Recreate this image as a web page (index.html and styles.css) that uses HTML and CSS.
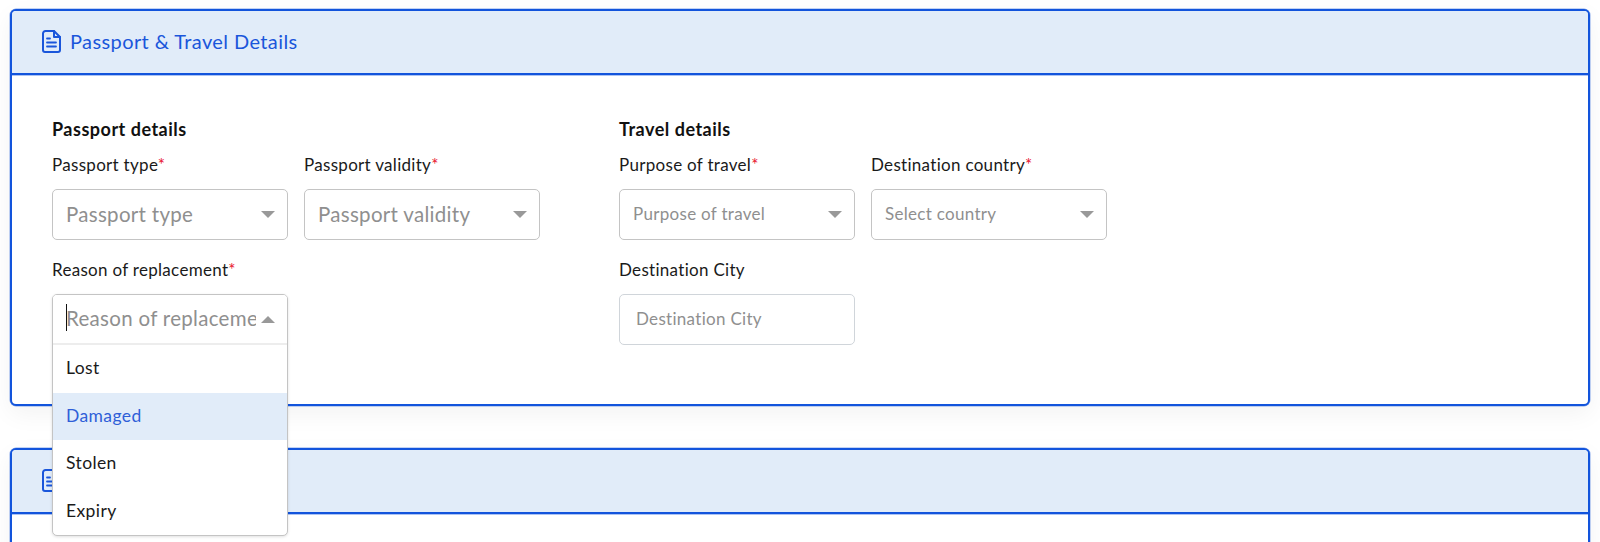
FILE: index.html
```html
<!DOCTYPE html>
<html lang="en">
<head>
    <meta charset="UTF-8">
    <meta name="viewport" content="width=device-width, initial-scale=1.0">
    <title>Passport &amp; Travel Details</title>
    <link rel="stylesheet" href="styles.css">
</head>
<body>
    <div class="container">
        <section class="card">
            <div class="card-header">
                <svg class="doc-icon" viewBox="0 0 19 23" fill="none" stroke="currentColor" stroke-width="2" stroke-linejoin="round" stroke-linecap="round">
                    <path d="M3.500 1H12l6 6v13a2 2 0 0 1-2 2H3a2 2 0 0 1-2-2V3.500a2.500 2.500 0 0 1 2.500-2.500z"/>
                    <path d="M12 1v6h6"/>
                    <path d="M5 8.500h3M5 12.500h9M5 16.500h9" stroke-width="1.800"/>
                </svg>
                <span class="card-title">Passport &amp; Travel Details</span>
            </div>
            <div class="card-body">
                <div class="form-group">
                    <h3 class="group-title">Passport details</h3>
                    <div class="row">
                        <div class="field">
                            <label class="field-label">Passport type<span class="req">*</span></label>
                            <div class="select select-lg">
                                <span class="placeholder">Passport type</span>
                                <span class="arrow"></span>
                            </div>
                        </div>
                        <div class="field">
                            <label class="field-label">Passport validity<span class="req">*</span></label>
                            <div class="select select-lg">
                                <span class="placeholder">Passport validity</span>
                                <span class="arrow"></span>
                            </div>
                        </div>
                    </div>
                    <div class="row">
                        <div class="field field-open">
                            <label class="field-label">Reason of replacement<span class="req">*</span></label>
                            <div class="dropdown">
                                <div class="select select-open">
                                    <span class="text-cursor"></span>
                                    <span class="placeholder">Reason of replacement</span>
                                    <span class="arrow arrow-up"></span>
                                </div>
                                <ul class="menu">
                                    <li>Lost</li>
                                    <li class="selected">Damaged</li>
                                    <li>Stolen</li>
                                    <li>Expiry</li>
                                </ul>
                            </div>
                        </div>
                    </div>
                </div>
                <div class="form-group">
                    <h3 class="group-title">Travel details</h3>
                    <div class="row">
                        <div class="field">
                            <label class="field-label">Purpose of travel<span class="req">*</span></label>
                            <div class="select">
                                <span class="placeholder">Purpose of travel</span>
                                <span class="arrow"></span>
                            </div>
                        </div>
                        <div class="field">
                            <label class="field-label">Destination country<span class="req">*</span></label>
                            <div class="select">
                                <span class="placeholder">Select country</span>
                                <span class="arrow"></span>
                            </div>
                        </div>
                    </div>
                    <div class="row">
                        <div class="field">
                            <label class="field-label">Destination City</label>
                            <div class="text-input">
                                <span class="placeholder">Destination City</span>
                            </div>
                        </div>
                    </div>
                </div>
            </div>
        </section>

        <section class="card">
            <div class="card-header">
                <svg class="doc-icon" viewBox="0 0 19 23" fill="none" stroke="currentColor" stroke-width="2" stroke-linejoin="round" stroke-linecap="round">
                    <path d="M3.500 1H12l6 6v13a2 2 0 0 1-2 2H3a2 2 0 0 1-2-2V3.500a2.500 2.500 0 0 1 2.500-2.500z"/>
                    <path d="M12 1v6h6"/>
                    <path d="M5 8.500h3M5 12.500h9M5 16.500h9" stroke-width="1.800"/>
                </svg>
            </div>
            <div class="card-body"></div>
        </section>
    </div>
</body>
</html>
```

FILE: styles.css
```css
* {
    margin: 0;
    padding: 0;
    box-sizing: border-box;
    font-family: 'Lato', 'Open Sans', sans-serif;
}

html, body {
    height: 100%;
    overflow: hidden;
}

body {
    background-color: #fff;
    color: #1a1a1a;
}

.container {
    padding: 9px 10px 0;
    display: flex;
    flex-direction: column;
    gap: 42px;
}

.card {
    border: 2px solid #1254dc;
    border-radius: 6px;
    background-color: #fff;
    box-shadow: 0 0 0 0.5px rgba(18, 84, 220, 0.5), 0 8px 24px rgba(0, 0, 0, 0.05);
}

.card-header {
    height: 64px;
    display: flex;
    align-items: center;
    gap: 9px;
    padding-left: 30px;
    background-color: #e1ecf9;
    border-bottom: 2px solid #1254dc;
    border-radius: 4px 4px 0 0;
    box-shadow: 0 1px 0 rgba(18, 84, 220, 0.35);
    color: #1a56db;
}

.doc-icon {
    width: 19px;
    height: 23px;
    flex-shrink: 0;
    margin-bottom: 2px;
}

.card-title {
    font-size: 20px;
    letter-spacing: 0.4px;
    padding-bottom: 3px;
}

.card-body {
    display: flex;
    padding: 43px 0 0 40px;
    height: 329px;
    gap: 78px;
}

.form-group {
    width: 489px;
}

.group-title {
    font-size: 18px;
    font-weight: 700;
    color: #111;
    line-height: 22px;
    letter-spacing: 0.5px;
    margin-bottom: 15px;
}

.row {
    display: flex;
    gap: 16px;
    margin-bottom: 20px;
}

.field {
    width: 236px;
}

.field-label {
    display: block;
    font-size: 17px;
    letter-spacing: 0.3px;
    line-height: 20px;
    margin-bottom: 14px;
}

.req {
    color: #e8112d;
}

.select,
.text-input {
    height: 51px;
    border: 1px solid #c4c4c4;
    border-radius: 5px;
    background-color: #fff;
    display: flex;
    align-items: center;
    justify-content: space-between;
    padding: 0 12px 0 13px;
}

.text-input {
    border-color: #d0d5da;
    padding-left: 16px;
}

.placeholder {
    color: #8f8f8f;
    font-size: 17px;
    letter-spacing: 0.3px;
    white-space: nowrap;
    padding-bottom: 2px;
}

.select-lg .placeholder,
.select-open .placeholder {
    font-size: 20.500px;
    letter-spacing: 0.3px;
}

.arrow {
    width: 0;
    height: 0;
    border-left: 7px solid transparent;
    border-right: 7px solid transparent;
    border-top: 7px solid #999;
    flex-shrink: 0;
}

.arrow-up {
    border-top: none;
    border-bottom: 7px solid #999;
}

.field-open {
    position: relative;
    height: 76px;
}

.dropdown {
    position: absolute;
    left: 0;
    right: 0;
    z-index: 5;
    background-color: #fff;
    border: 1px solid #c4c4c4;
    border-radius: 5px;
    box-shadow: 0 1px 3px rgba(0, 0, 0, 0.12);
    overflow: hidden;
}

.select-open {
    position: relative;
    border: none;
    border-bottom: 2px solid #ededed;
    border-radius: 0;
    height: 50px;
    gap: 5px;
}

.select-open .placeholder {
    overflow: hidden;
    flex: 1;
}

.text-cursor {
    position: absolute;
    left: 13px;
    top: 9px;
    width: 1px;
    height: 27px;
    background-color: #111;
}

.menu {
    list-style: none;
}

.menu li {
    height: 47.500px;
    display: flex;
    align-items: center;
    padding: 0 0 2px 13px;
    font-size: 17.500px;
    letter-spacing: 0.4px;
    color: #1a1a1a;
}

.menu li.selected {
    background-color: #e1ecf9;
    color: #2f5fd8;
}
```
